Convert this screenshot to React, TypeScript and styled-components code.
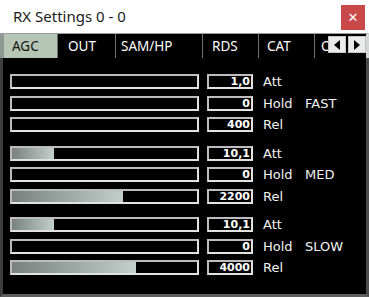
import React from 'react';
import styled, { createGlobalStyle } from 'styled-components';

const Global = createGlobalStyle`
  html, body { margin: 0; padding: 0; background: #fff; }
  body { width: 369px; height: 297px; overflow: hidden; }
`;

const Window = styled.div`
  width: 369px;
  height: 297px;
  box-sizing: border-box;
  display: flex;
  flex-direction: column;
  background: #fff;
  font-family: "Noto Sans", "Open Sans", sans-serif;
`;

const TitleBar = styled.div`
  height: 33px;
  flex: none;
  box-sizing: border-box;
  display: flex;
  align-items: flex-start;
  justify-content: space-between;
  padding: 0 4px 0 13px;
  background: #fff;
`;

const Title = styled.div`
  font-size: 15px;
  line-height: 33px;
  color: #1b1b1b;
`;

const CloseButton = styled.div`
  margin-top: 5px;
  width: 24px;
  height: 25px;
  background: #c94849;
  color: #fff;
  display: flex;
  align-items: center;
  justify-content: center;
  font-size: 13px;
  font-family: "DejaVu Sans", sans-serif;
`;

const TabStrip = styled.div`
  height: 25px;
  flex: none;
  box-sizing: border-box;
  display: flex;
  background: #000;
  border-top: 1px solid #9c9c9c;
  border-left: 4px solid #8d9893;
  border-right: 3px solid #d2d6d4;
`;

const TabsViewport = styled.div`
  flex: 1;
  display: flex;
  overflow: hidden;
`;

const Tab = styled.div<{ $w: number; $pl: number; $active?: boolean }>`
  flex: none;
  width: ${(p) => p.$w}px;
  box-sizing: border-box;
  padding-left: ${(p) => p.$pl}px;
  font-size: 13.5px;
  line-height: 24px;
  white-space: nowrap;
  color: ${(p) => (p.$active ? '#141414' : '#fff')};
  background: ${(p) => (p.$active ? '#b6c6b4' : '#000')};
  border-right: 1px solid #6e6e6e;
`;

const Arrows = styled.div`
  flex: none;
  display: flex;
  gap: 2px;
  padding-top: 2px;
`;

const ArrowBtn = styled.div`
  width: 18px;
  height: 17px;
  box-sizing: border-box;
  background: #ebebeb;
  border: 1px solid #c4c4c4;
  display: flex;
  align-items: center;
  justify-content: center;
`;

const Body = styled.div`
  flex: 1;
  min-height: 0;
  background: #000;
  box-sizing: border-box;
  border-left: 3px solid #3e3e3e;
  border-right: 3px solid #4c4c4c;
  border-bottom: 3px solid #5e5e5e;
  padding: 16px 0 0 7px;
  display: flex;
  flex-direction: column;
  gap: 13.5px;
`;

const Group = styled.div`
  display: grid;
  grid-template-columns: 189px 46px 42px auto;
  grid-auto-rows: 15px;
  row-gap: 6.5px;
  column-gap: 8px;
`;

const Track = styled.div`
  grid-column: 1;
  box-sizing: border-box;
  height: 15px;
  border: 2px solid;
  border-color: #bdbdbd #e2e2e2 #e2e2e2 #bdbdbd;
  background: #000;
  display: flex;
`;

const Fill = styled.div`
  height: 100%;
  background: linear-gradient(to right, #78817e, #c3cfcb);
`;

const ValueBox = styled.div`
  grid-column: 2;
  box-sizing: border-box;
  height: 15px;
  border: 2px solid;
  border-color: #bdbdbd #e2e2e2 #e2e2e2 #bdbdbd;
  background: #000;
  color: #fff;
  font-family: "DejaVu Sans", sans-serif;
  font-weight: bold;
  font-size: 11px;
  line-height: 11px;
  text-align: right;
  padding-right: 1px;
`;

const Label = styled.div`
  grid-column: 3;
  margin-left: 2px;
  color: #f2f2f2;
  font-family: "DejaVu Sans", sans-serif;
  font-size: 13px;
  line-height: 15px;
  white-space: nowrap;
`;

const Mode = styled.div`
  grid-column: 4;
  grid-row: 2;
  margin-left: -6px;
  color: #f2f2f2;
  font-family: "DejaVu Sans", sans-serif;
  font-size: 13px;
  line-height: 15px;
`;

const Triangle = ({ dir }: { dir: 'l' | 'r' }) => (
  <svg width="6" height="10" viewBox="0 0 6 10">
    {dir === 'l' ? <polygon points="6,0 0,5 6,10" fill="#000" /> : <polygon points="0,0 6,5 0,10" fill="#000" />}
  </svg>
);

const tabs = [
  { label: 'AGC', w: 54, pl: 8, active: true },
  { label: 'OUT', w: 58, pl: 10 },
  { label: 'SAM/HP', w: 87, pl: 5 },
  { label: 'RDS', w: 56, pl: 9 },
  { label: 'CAT', w: 56, pl: 8 },
  { label: 'OPT', w: 60, pl: 6 },
];

type Row = { value: string; label: string; fill: number };
const groups: { mode: string; rows: Row[] }[] = [
  {
    mode: 'FAST',
    rows: [
      { value: '1,0', label: 'Att', fill: 0 },
      { value: '0', label: 'Hold', fill: 0 },
      { value: '400', label: 'Rel', fill: 0 },
    ],
  },
  {
    mode: 'MED',
    rows: [
      { value: '10,1', label: 'Att', fill: 42 },
      { value: '0', label: 'Hold', fill: 0 },
      { value: '2200', label: 'Rel', fill: 111 },
    ],
  },
  {
    mode: 'SLOW',
    rows: [
      { value: '10,1', label: 'Att', fill: 42 },
      { value: '0', label: 'Hold', fill: 0 },
      { value: '4000', label: 'Rel', fill: 124 },
    ],
  },
];

export default function App() {
  return (
    <>
      <Global />
      <Window>
        <TitleBar>
          <Title>RX Settings 0 - 0</Title>
          <CloseButton>✕</CloseButton>
        </TitleBar>
        <TabStrip>
          <TabsViewport>
            {tabs.map((t) => (
              <Tab key={t.label} $w={t.w} $pl={t.pl} $active={t.active}>
                {t.label}
              </Tab>
            ))}
          </TabsViewport>
          <Arrows>
            <ArrowBtn>
              <Triangle dir="l" />
            </ArrowBtn>
            <ArrowBtn>
              <Triangle dir="r" />
            </ArrowBtn>
          </Arrows>
        </TabStrip>
        <Body>
          {groups.map((g) => (
            <Group key={g.mode}>
              {g.rows.map((r) => (
                <React.Fragment key={r.label}>
                  <Track>{r.fill > 0 && <Fill style={{ width: r.fill }} />}</Track>
                  <ValueBox>{r.value}</ValueBox>
                  <Label>{r.label}</Label>
                </React.Fragment>
              ))}
              <Mode>{g.mode}</Mode>
            </Group>
          ))}
        </Body>
      </Window>
    </>
  );
}
